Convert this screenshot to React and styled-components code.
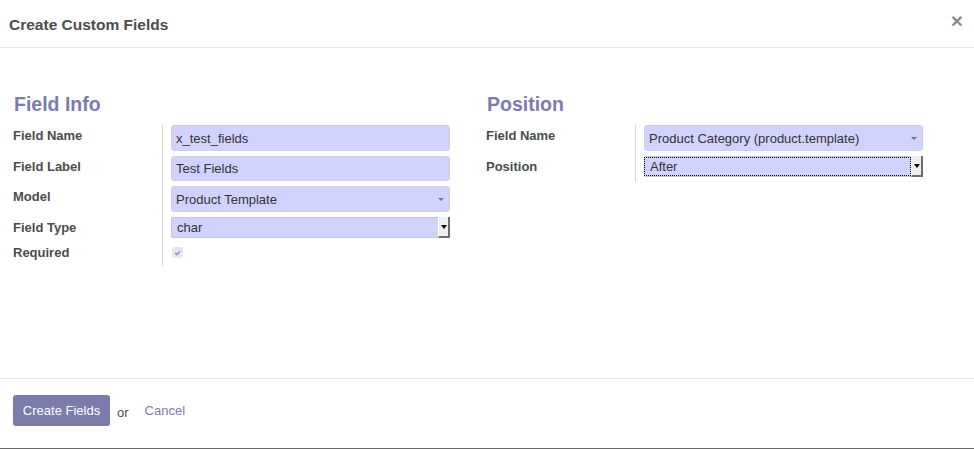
import React from "react";
import styled, { createGlobalStyle } from "styled-components";

const Global = createGlobalStyle`
  html, body { margin: 0; padding: 0; background: #fff; }
  body { font-family: "Liberation Sans", Arial, sans-serif; font-size: 13px; color: #4c4c4c; }
  * { box-sizing: border-box; }
`;

const Dialog = styled.div`
  width: 974px;
  height: 449px;
  display: flex;
  flex-direction: column;
  background: #fff;
  border-bottom: 1px solid #6a6a6a;
`;

const Header = styled.header`
  height: 48px;
  flex: none;
  display: flex;
  align-items: center;
  justify-content: space-between;
  padding: 2px 11px 0 9px;
  border-bottom: 1px solid #e5e5e5;
`;

const Title = styled.h4`
  margin: 0;
  font-size: 15.5px;
  font-weight: 700;
  color: #4c4c4c;
`;

const Close = styled.span`
  font-size: 21px;
  font-weight: 700;
  line-height: 1;
  color: #8a8a8a;
  margin-top: -9px;
`;

const Body = styled.main`
  flex: 1;
  display: flex;
  gap: 36px;
  padding: 44px 13px 0 13px;
`;

const Column = styled.section`
  width: 437px;
  display: flex;
  flex-direction: column;
`;

const Heading = styled.h3`
  margin: 0 0 9px 1px;
  font-size: 19.5px;
  line-height: 24px;
  font-weight: 700;
  color: #7c7bad;
`;

const Grid = styled.div`
  display: grid;
  grid-template-columns: 149px 288px;
`;

const Label = styled.label`
  font-weight: 700;
  font-size: 13px;
  line-height: 21px;
  color: #4c4c4c;
`;

const Cell = styled.div`
  border-left: 1px solid #d9d9d9;
  padding: 0 0 0 8px;
  height: ${(p) => p.$h}px;
`;

const Input = styled.div`
  width: 279px;
  height: ${(p) => p.$h || 26}px;
  background: #d2d2ff;
  border: 1px solid #cfcfdf;
  border-radius: 3px;
  display: flex;
  align-items: center;
  padding: 0 5px 0 4px;
  font-size: 13px;
  color: #333;
`;

const Caret = styled.span`
  margin-left: auto;
  width: 0;
  height: 0;
  border-left: 3px solid transparent;
  border-right: 3px solid transparent;
  border-top: 3px solid #777;
`;

const Native = styled.div`
  width: 279px;
  height: 21px;
  background: #d2d2ff;
  border: 1px solid #c7c7d4;
  border-right: none;
  border-radius: 2px;
  display: flex;
  align-items: stretch;
  font-size: 13px;
  color: #333;
`;

const NativeText = styled.span`
  flex: 1;
  display: flex;
  align-items: center;
  padding-left: 5px;
  margin: 1px 1px 1px 0;
  outline: ${(p) => (p.$focus ? "1px dotted #000" : "none")};
`;

const NativeBtn = styled.span`
  width: 12px;
  background: #efefef;
  border-right: 2px solid #6d6d6d;
  border-bottom: 2px solid #6d6d6d;
  border-left: 1px solid #fff;
  margin: -1px 0;
  display: flex;
  align-items: center;
  justify-content: center;
  &::after {
    content: "";
    width: 0;
    height: 0;
    border-left: 3px solid transparent;
    border-right: 3px solid transparent;
    border-top: 4px solid #000;
  }
`;

const Check = styled.span`
  display: flex;
  align-items: center;
  justify-content: center;
  width: 11px;
  height: 11px;
  margin: 5px 0 0 1px;
  border-radius: 2px;
  background: #e6e6f0;
`;

const Footer = styled.footer`
  height: 70px;
  flex: none;
  border-top: 1px solid #e5e5e5;
  display: flex;
  align-items: center;
  padding: 0 13px 6px;
`;

const Button = styled.button`
  height: 31px;
  width: 97px;
  border: none;
  border-radius: 3px;
  background: #7c7bad;
  color: #fff;
  font-family: "Liberation Sans", Arial, sans-serif;
  font-size: 13px;
  padding: 0;
`;

const Or = styled.span`
  margin: 3px 0 0 7px;
  font-size: 13px;
  color: #4c4c4c;
`;

const Link = styled.a`
  margin: 0 0 0 16px;
  font-size: 13px;
  color: #7c7bad;
  text-decoration: none;
`;

export default function App() {
  return (
    <>
      <Global />
      <Dialog>
        <Header>
          <Title>Create Custom Fields</Title>
          <Close>×</Close>
        </Header>
        <Body>
          <Column>
            <Heading>Field Info</Heading>
            <Grid>
              <Label>Field Name</Label>
              <Cell $h={31}>
                <Input>x_test_fields</Input>
              </Cell>
              <Label>Field Label</Label>
              <Cell $h={30}>
                <Input $h={25}>Test Fields</Input>
              </Cell>
              <Label>Model</Label>
              <Cell $h={31}>
                <Input>
                  Product Template
                  <Caret />
                </Input>
              </Cell>
              <Label>Field Type</Label>
              <Cell $h={25}>
                <Native>
                  <NativeText>char</NativeText>
                  <NativeBtn />
                </Native>
              </Cell>
              <Label>Required</Label>
              <Cell $h={24}>
                <Check>
                  <svg width="7" height="6" viewBox="0 0 7 6">
                    <path d="M1 3 L2.8 4.6 L6 1.2" fill="none" stroke="#8a89b8" strokeWidth="1.3" />
                  </svg>
                </Check>
              </Cell>
            </Grid>
          </Column>
          <Column>
            <Heading>Position</Heading>
            <Grid>
              <Label>Field Name</Label>
              <Cell $h={31}>
                <Input>
                  Product Category (product.template)
                  <Caret />
                </Input>
              </Cell>
              <Label>Position</Label>
              <Cell $h={26}>
                <Native>
                  <NativeText $focus>After</NativeText>
                  <NativeBtn />
                </Native>
              </Cell>
            </Grid>
          </Column>
        </Body>
        <Footer>
          <Button>Create Fields</Button>
          <Or>or</Or>
          <Link href="#">Cancel</Link>
        </Footer>
      </Dialog>
    </>
  );
}
